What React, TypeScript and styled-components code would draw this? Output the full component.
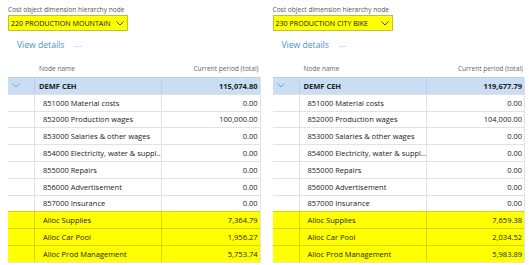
import React from "react";
import styled, { createGlobalStyle } from "styled-components";

type Row = {
  name: string;
  amount: string;
  alloc?: boolean;
};

type PanelData = {
  node: string;
  total: string;
  rows: Row[];
};

const accounts = [
  "851000 Material costs",
  "852000 Production wages",
  "853000 Salaries & other wages",
  "854000 Electricity, water & suppl...",
  "855000 Repairs",
  "856000 Advertisement",
  "857000 Insurance",
];

const makeRows = (wages: string, allocs: string[]): Row[] => [
  ...accounts.map((name, i) => ({ name, amount: i === 1 ? wages : "0.00" })),
  { name: "Alloc Supplies", amount: allocs[0], alloc: true },
  { name: "Alloc Car Pool", amount: allocs[1], alloc: true },
  { name: "Alloc Prod Management", amount: allocs[2], alloc: true },
];

const panels: PanelData[] = [
  {
    node: "220 PRODUCTION MOUNTAIN",
    total: "115,074.80",
    rows: makeRows("100,000.00", ["7,364.79", "1,956.27", "5,753.74"]),
  },
  {
    node: "230 PRODUCTION CITY BIKE",
    total: "119,677.79",
    rows: makeRows("104,000.00", ["7,659.38", "2,034.52", "5,983.89"]),
  },
];

const Chevron = ({ color }: { color: string }) => (
  <svg width="8" height="5" viewBox="0 0 8 5">
    <path d="M0.5 0.5 L4 4 L7.5 0.5" fill="none" stroke={color} strokeWidth="0.9" />
  </svg>
);

const Panel = ({ data }: { data: PanelData }) => (
  <StyledPanel>
    <StyledLabel>Cost object dimension hierarchy node</StyledLabel>
    <StyledDropdown>
      <span>{data.node}</span>
      <Chevron color="#333" />
    </StyledDropdown>
    <StyledToolbar>
      <StyledLink>View details</StyledLink>
      <StyledMore>···</StyledMore>
    </StyledToolbar>
    <StyledHeader>
      <span />
      <StyledHeadName>Node name</StyledHeadName>
      <StyledHeadAmount>Current period (total)</StyledHeadAmount>
    </StyledHeader>
    <StyledTable>
      <StyledRow $kind="root">
        <StyledToggle>
          <Chevron color="#5b9bd5" />
        </StyledToggle>
        <StyledRootName>DEMF CEH</StyledRootName>
        <StyledAmount $bold>{data.total}</StyledAmount>
      </StyledRow>
      {data.rows.map((row) => (
        <StyledRow key={row.name} $kind={row.alloc ? "alloc" : "plain"}>
          <StyledToggle />
          <StyledName>{row.name}</StyledName>
          <StyledAmount>{row.amount}</StyledAmount>
        </StyledRow>
      ))}
    </StyledTable>
  </StyledPanel>
);

export default function App() {
  return (
    <>
      <GlobalStyle />
      <StyledPage>
        {panels.map((p) => (
          <Panel key={p.node} data={p} />
        ))}
      </StyledPage>
    </>
  );
}

const GlobalStyle = createGlobalStyle`
  body {
    margin: 0;
    background: #fff;
    font-family: "Open Sans", "Noto Sans", sans-serif;
    color: #222;
  }
`;

const StyledPage = styled.div`
  display: flex;
  gap: 12px;
  padding: 5px 4px 0 8px;
`;

const StyledPanel = styled.div`
  width: 253px;
  display: flex;
  flex-direction: column;
`;

const StyledLabel = styled.div`
  font-size: 6.6px;
  line-height: 10px;
  color: #555;
`;

const StyledDropdown = styled.div`
  box-sizing: border-box;
  width: 120px;
  height: 16px;
  display: flex;
  align-items: center;
  justify-content: space-between;
  padding: 0 3px 0 2px;
  background: #ffff00;
  border: 1px solid #b8c23a;
  font-size: 7.1px;
  color: #111;
  white-space: nowrap;
`;

const StyledToolbar = styled.div`
  display: flex;
  align-items: center;
  gap: 10px;
  height: 14px;
  margin-top: 7px;
  padding-left: 9px;
  font-size: 8.6px;
`;

const StyledLink = styled.span`
  color: #4a90d9;
`;

const StyledMore = styled.span`
  color: #4a90d9;
  font-size: 8px;
  letter-spacing: 0.5px;
`;

const StyledHeader = styled.div`
  display: grid;
  grid-template-columns: 27px 127px 1fr;
  align-items: center;
  height: 17px;
  margin-top: 8px;
  font-size: 6.6px;
  color: #666;
`;

const StyledHeadName = styled.span`
  padding-left: 4px;
`;

const StyledHeadAmount = styled.span`
  text-align: right;
  padding-right: 2px;
`;

const StyledTable = styled.div`
  display: flex;
  flex-direction: column;
  border-right: 1px solid #e2e2e2;
  border-bottom: 1px solid #e2e2e2;
`;

const rowColors = {
  root: { bg: "#c9def3", line: "#b7cfe8" },
  plain: { bg: "#ffffff", line: "#e2e2e2" },
  alloc: { bg: "#ffff00", line: "#d8d400" },
};

const StyledRow = styled.div<{ $kind: "root" | "plain" | "alloc" }>`
  box-sizing: border-box;
  display: grid;
  grid-template-columns: 27px 127px 1fr;
  align-items: stretch;
  height: 16.8px;
  background: ${(p) => rowColors[p.$kind].bg};
  border-top: 1px solid ${(p) => rowColors[p.$kind].line};
  font-size: 7.5px;
  color: #222;

  & > * {
    display: flex;
    align-items: center;
    border-right: 1px solid ${(p) => rowColors[p.$kind].line};
  }
  & > *:last-child {
    border-right: none;
  }
`;

const StyledToggle = styled.div`
  padding-left: 4px;
`;

const StyledRootName = styled.div`
  padding-left: 4px;
  font-weight: 700;
`;

const StyledName = styled.div`
  padding-left: 8px;
  white-space: nowrap;
  overflow: hidden;
`;

const StyledAmount = styled.div<{ $bold?: boolean }>`
  justify-content: flex-end;
  padding-right: 2px;
  font-weight: ${(p) => (p.$bold ? 700 : 400)};
`;
